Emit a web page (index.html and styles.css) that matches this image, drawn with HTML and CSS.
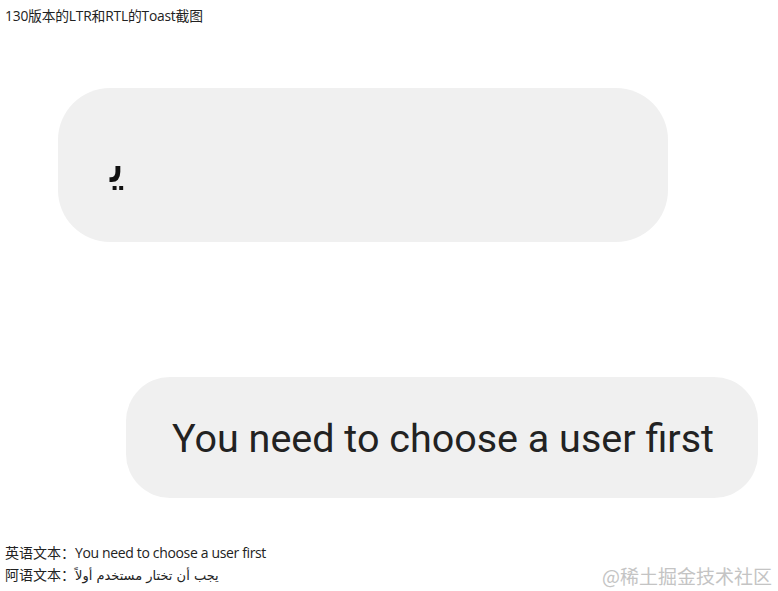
FILE: index.html
```html
<!DOCTYPE html>
<html lang="zh-CN">
<head>
<meta charset="utf-8">
<title>Toast</title>
<link rel="stylesheet" href="styles.css">
</head>
<body>
<div class="page">
  <p class="title">130版本的LTR和RTL的Toast截图</p>
  <div class="toast toast-rtl"><span class="glyph" lang="ar">ﻳ</span></div>
  <div class="toast toast-ltr"><span class="toast-text">You need to choose a user first</span></div>
  <div class="notes">
    <p class="note">英语文本：<span class="en">You need to choose a user first</span></p>
    <p class="note">阿语文本：<span class="ar" lang="ar">يجب أن تختار مستخدم أولاً</span></p>
  </div>
  <div class="watermark">@稀土掘金技术社区</div>
</div>
</body>
</html>
```
FILE: styles.css
```css
html, body {
  margin: 0;
  padding: 0;
  background: #ffffff;
}
.page {
  position: relative;
  width: 778px;
  height: 591px;
  overflow: hidden;
  display: flex;
  flex-direction: column;
  font-family: "Open Sans", "Noto Sans CJK SC", sans-serif;
  color: #222;
}
.title {
  margin: 6px 0 0 5px;
  font-size: 13.8px;
  line-height: 20px;
  color: #222;
  letter-spacing: -0.2px;
}
.toast {
  background: #f0f0f0;
  display: flex;
  align-items: center;
}
.toast-rtl {
  margin: 62px 0 0 58px;
  width: 610px;
  height: 154px;
  border-radius: 52px;
  padding-left: 52px;
  box-sizing: border-box;
}
.glyph {
  font-family: "DejaVu Sans", sans-serif;
  font-size: 54px;
  color: #111;
  line-height: 1;
  margin-top: -2px;
}
.toast-ltr {
  margin: 135px 0 0 126px;
  width: 632px;
  height: 121px;
  border-radius: 44px;
  justify-content: center;
}
.toast-text {
  font-family: Roboto, sans-serif;
  font-size: 39.5px;
  color: #222;
  margin-top: 2px;
  margin-left: 2px;
}
.notes {
  margin: 44px 0 0 5px;
}
.note {
  margin: 0;
  font-size: 14px;
  line-height: 22px;
  color: #222;
}
.en {
  letter-spacing: -0.35px;
}
.ar {
  font-family: "DejaVu Sans", sans-serif;
  font-size: 13px;
}
.watermark {
  position: absolute;
  right: 6px;
  top: 562px;
  font-size: 19px;
  line-height: 28px;
  color: #c4c4c4;
  font-family: "Noto Sans CJK SC", sans-serif;
}
```
